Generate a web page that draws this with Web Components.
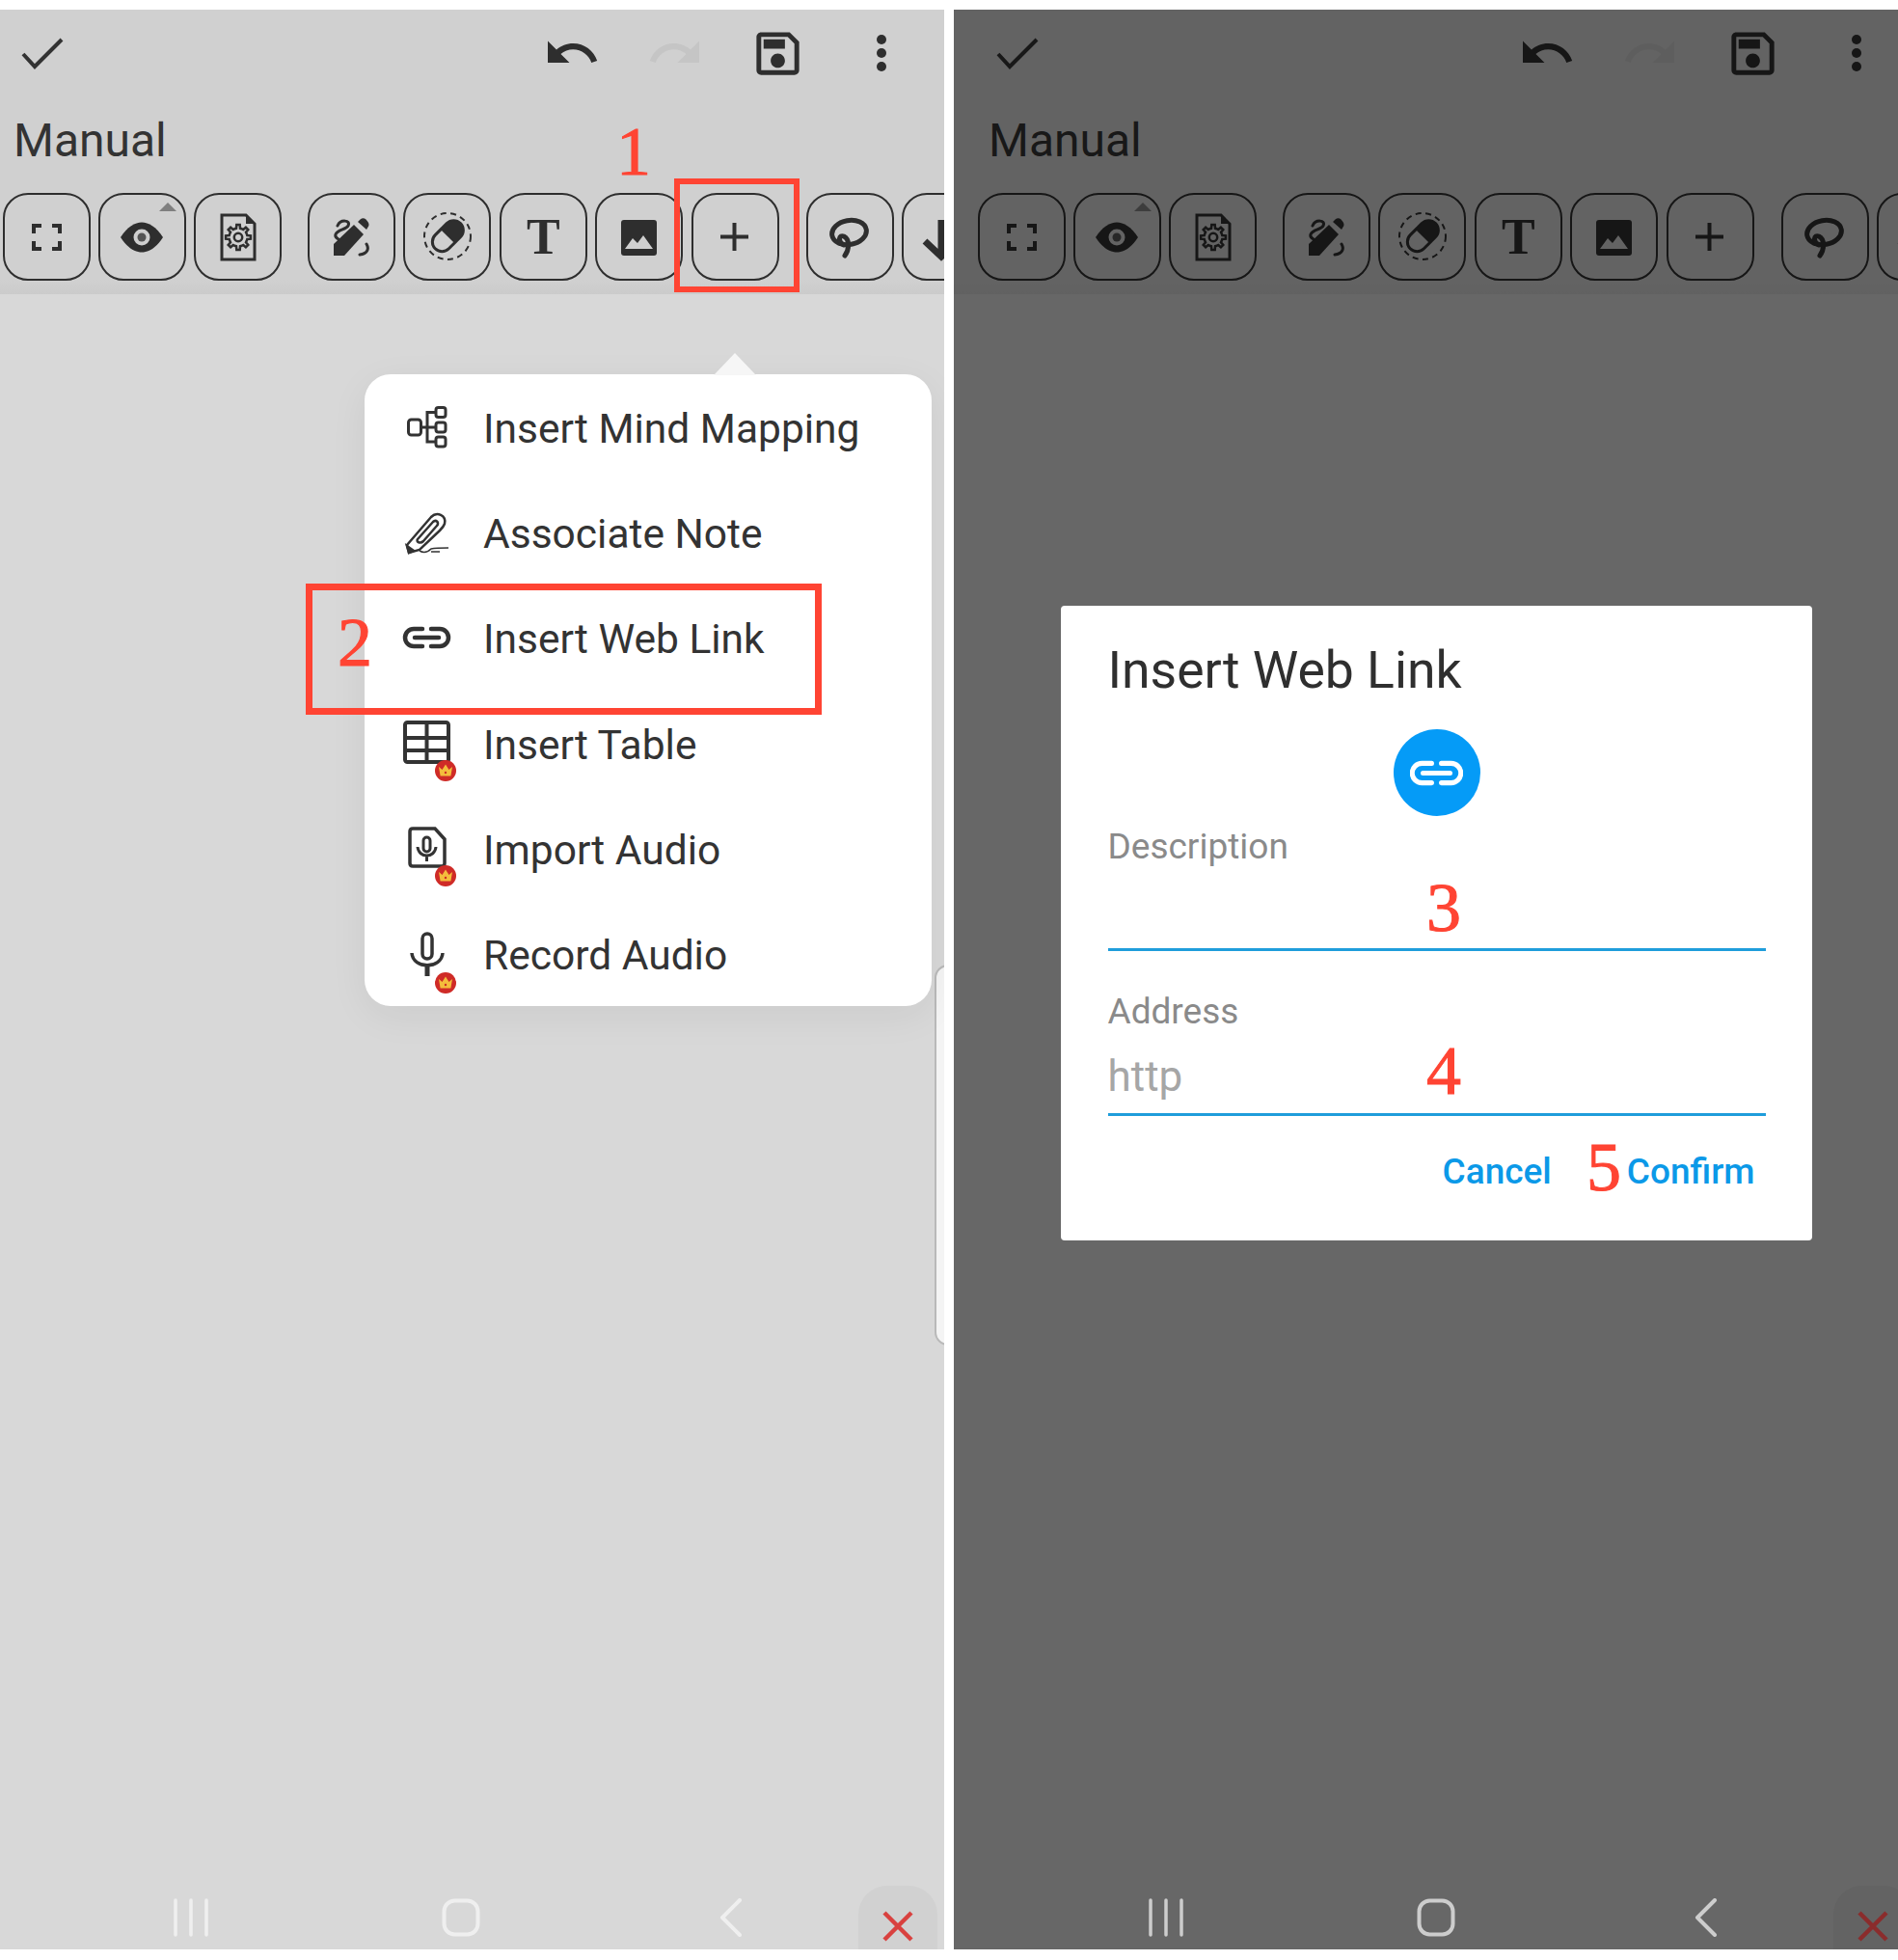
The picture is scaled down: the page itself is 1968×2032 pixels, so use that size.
<!DOCTYPE html>
<html lang="en">
<head>
<meta charset="utf-8">
<title>Insert Web Link</title>
<style>
    html, body { margin: 0; background: #fff; }
    body { font-family: Roboto, "Liberation Sans", sans-serif; }
</style>
</head>
<body>
<guide-page>
    <note-screen>
        <popup-menu>
            <menu-row label="Insert Mind Mapping" icon="mind"></menu-row>
            <menu-row label="Associate Note" icon="clip"></menu-row>
            <menu-row label="Insert Web Link" icon="link"></menu-row>
            <menu-row label="Insert Table" icon="table"></menu-row>
            <menu-row label="Import Audio" icon="import"></menu-row>
            <menu-row label="Record Audio" icon="mic"></menu-row>
        </popup-menu>
        <mark-box x="699" y="175" w="130" h="118" line="6"></mark-box>
        <mark-box x="317" y="595" w="535" h="136" line="7"></mark-box>
        <step-num x="639" y="111">1</step-num>
        <step-num x="350" y="620">2</step-num>
    </note-screen>
    <note-screen dimmed>
        <link-dialog></link-dialog>
        <step-num x="490" y="895" over>3</step-num>
        <step-num x="490" y="1064" over>4</step-num>
        <step-num x="656" y="1164" over>5</step-num>
    </note-screen>
</guide-page>

<script>
const DARK = '#2e2e2e';
const LINK_PATH = 'M20 3H11a9 9 0 0 0 0 18h9M29 3h9a9 9 0 0 1 0 18h-9M12 12h25';

function gearPath(cx, cy, outer, inner, teeth) {
    let d = '';
    const step = Math.PI * 2 / teeth;
    for (let i = 0; i < teeth; i++) {
        const a = i * step;
        const pts = [
            [inner, a - step * 0.5], [inner, a - step * 0.27],
            [outer, a - step * 0.17], [outer, a + step * 0.17], [inner, a + step * 0.27]
        ];
        pts.forEach(([r, t], n) => {
            const x = (cx + r * Math.cos(t)).toFixed(1);
            const y = (cy + r * Math.sin(t)).toFixed(1);
            d += (i === 0 && n === 0 ? 'M' : 'L') + x + ' ' + y;
        });
    }
    return d + 'Z';
}

function crown(cx, cy) {
    return `<circle cx="${cx}" cy="${cy}" r="11" fill="#cf2b27"/>
        <path d="M${cx - 7} ${cy - 4}l3.5 3 3.5-5.5 3.5 5.5 3.5-3-1.6 9.5h-10.8z" fill="#f4bd3c"/>
        <circle cx="${cx}" cy="${cy + 2}" r="1.2" fill="#cf2b27"/>`;
}

// toolbar icons, drawn in the 91x91 box of their button
const TOOL_ICONS = {
    frame: `<path d="M32 42V34h8M51 34h8v8M32 50v8h8M51 58h8v-8" fill="none" stroke="${DARK}" stroke-width="4"/>`,
    eye: `<path d="M23 46C30 35 38 30.500 45 30.500S60 35 67 46C60 57 52 61.500 45 61.500S30 57 23 46Z" fill="${DARK}"/>
        <circle cx="45" cy="46" r="8.500" fill="#cfcfcf"/><circle cx="45" cy="46" r="4.500" fill="#555"/>
        <path d="M63 19l9-9 9 9z" fill="#7f7f7f"/>`,
    doc: `<path d="M29 23H54L63 32V69H29Z" fill="none" stroke="${DARK}" stroke-width="3"/>
        <path d="M54 23l9 9h-9z" fill="${DARK}"/>
        <path d="${gearPath(46, 46, 13, 9.500, 8)}" fill="none" stroke="${DARK}" stroke-width="2.500"/>
        <circle cx="46" cy="46" r="4.200" fill="none" stroke="${DARK}" stroke-width="2.500"/>`,
    pencil: `<path d="M27 65V53L48 33 58 43 38 65Z" fill="${DARK}"/>
        <path d="M52 30l2.500-2.500q3-2.500 6 0l2 2.500q2 3 0 5.500L61 38Z" fill="${DARK}"/>
        <path d="M31 34C34 27 45 28 42 34 40 38 31 38 29 43 28 46 30 47 32 48M61 53C64 58 62 63 54 64" fill="none" stroke="${DARK}" stroke-width="3" stroke-linecap="round"/>`,
    eraser: `<circle cx="46" cy="45" r="24" fill="none" stroke="${DARK}" stroke-width="2" stroke-dasharray="6 4.500"/>
        <g transform="rotate(-45 46 45)">
            <rect x="28" y="35" width="37" height="20" rx="10" fill="none" stroke="${DARK}" stroke-width="3"/>
            <path d="M46 35H55a10 10 0 0 1 0 20H46Z" fill="${DARK}"/>
        </g>`,
    image: `<rect x="27" y="28" width="37" height="37" rx="3" fill="${DARK}"/>
        <path d="M31 58L39 47 44 52 50 44 60 58Z" fill="#cfcfcf"/>`,
    plus: `<path d="M45.500 31V60M31 45.500H60" stroke="${DARK}" stroke-width="4" fill="none"/>`,
    lasso: `<ellipse cx="45.500" cy="41" rx="18" ry="12.500" transform="rotate(-10 45.500 41)" fill="none" stroke="${DARK}" stroke-width="5"/>
        <path d="M40 54C33 50 35 43 40 45 46 48 46 58 41 65" fill="none" stroke="${DARK}" stroke-width="5" stroke-linecap="round"/>`,
    down: `<path d="M42 28V66M25 50L42 66 59 50" fill="none" stroke="${DARK}" stroke-width="7"/>`
};

// menu icons, drawn in an 80x70 box centred on the row
const MENU_ICONS = {
    mind: `<g fill="none" stroke="#333" stroke-width="3" transform="translate(20 13)">
        <rect x="1.500" y="14" width="13" height="16" rx="3"/>
        <rect x="30" y="1.500" width="10" height="10" rx="2.500"/><rect x="30" y="17" width="10" height="10" rx="2.500"/><rect x="30" y="32" width="10" height="10" rx="2.500"/>
        <path d="M15 22H30M30 6.500H21V37H30"/></g>`,
    clip: `<g fill="none" stroke="#333" stroke-width="2.500" transform="translate(18 13)">
        <path d="M2 35L27 6C33 0 43 4 41 13 40 16 38 18 36 20L15 40 4 43Z"/>
        <path d="M13 29L29 11C32 8 36 12 33 15L19 31C16 34 11 32 13 29Z"/>
        <path d="M4 43L2 36 9 41Z" fill="#333"/>
        <path d="M15 41C20 44 24 42 27 39 32 38 38 38 45 38M27 42H36" stroke-width="1.500"/></g>`,
    link: `<path d="${LINK_PATH}" transform="translate(16 23)" fill="none" stroke="#333" stroke-width="4.500" stroke-linecap="round"/>`,
    table: `<g fill="none" stroke="#333" stroke-width="4" transform="translate(16 12)">
        <rect x="2" y="2" width="45" height="41" rx="2.500"/><path d="M24.500 2V43M2 18H47M2 31H47"/></g>${crown(60, 64)}`,
    import: `<g fill="none" stroke="#333" stroke-width="3.500" transform="translate(21 13)">
        <path d="M5 2H28L38 13V38Q38 41 35 41H5Q2 41 2 38V5Q2 2 5 2Z"/>
        <rect x="16" y="11" width="7" height="15" rx="3.500" stroke-width="3"/>
        <path d="M10 21C11 33 28 33 29 21M19.500 30V36" stroke-width="3"/></g>${crown(60, 64)}`,
    mic: `<g fill="none" stroke="#333" stroke-width="3.500" transform="translate(24 12)">
        <rect x="12" y="2" width="10" height="26" rx="5"/>
        <path d="M1 22C2 39 32 39 33 22"/><path d="M17 35V46" stroke-width="5"/></g>${crown(60, 65)}`
};

class GuidePage extends HTMLElement {
    constructor() {
        super();
        this.attachShadow({ mode: 'open' });
        this.shadowRoot.innerHTML = `
            <style>
                :host { display: flex; gap: 10px; padding: 10px 0 11px; height: 2032px; box-sizing: border-box; width: 1968px; overflow: hidden; }
            </style>
            <slot></slot>
        `;
    }
}

class NoteScreen extends HTMLElement {
    constructor() {
        super();
        this.attachShadow({ mode: 'open' });
        this.shadowRoot.innerHTML = `
            <style>
                :host {
                    --inset: 0px;
                    --nav-color: #efefef;
                    --close-bg: #d1d1d1;
                    --close-x: #d9413f;
                    display: flex;
                    flex-direction: column;
                    position: relative;
                    width: 979px;
                    overflow: hidden;
                    background: #d8d8d8;
                    color: #333;
                }
                :host([dimmed]) {
                    --inset: 22px;
                    --nav-color: #cdcdcd;
                    --close-bg: #636363;
                    --close-x: #8b2c2c;
                }
                .content { flex: 1; display: flex; flex-direction: column; flex-shrink: 0; width: calc(979px + var(--inset)); }
                .rest { flex: 1; }
                .scrim { display: none; position: absolute; inset: 0; background: rgba(0, 0, 0, .52); z-index: 1; }
                :host([dimmed]) .scrim { display: block; }
                .handle {
                    position: absolute;
                    left: calc(969px + var(--inset));
                    top: 990px;
                    width: 30px;
                    height: 395px;
                    box-sizing: border-box;
                    background: #f4f4f4;
                    border: 2px solid #b9b9b9;
                    border-radius: 14px;
                }
            </style>
            <div class="content">
                <screen-header></screen-header>
                <div class="rest"></div>
                <nav-bar></nav-bar>
            </div>
            <div class="handle"></div>
            <div class="scrim"></div>
            <slot></slot>
        `;
    }
}

class ScreenHeader extends HTMLElement {
    constructor() {
        super();
        this.attachShadow({ mode: 'open' });
        const group = (names) => names.map(n => `<tool-button icon="${n}"></tool-button>`).join('');
        this.shadowRoot.innerHTML = `
            <style>
                :host { display: block; background: linear-gradient(#d0d0d0 95%, #cbcbcb); height: 295px; overflow: hidden; padding-left: var(--inset); }
                .top { display: flex; align-items: center; height: 90px; padding-right: 12px; width: 967px; }
                .slot { width: 107px; height: 90px; display: flex; align-items: center; justify-content: center; }
                .check { margin-right: auto; width: 88px; }
                .title { font-size: 48px; height: 100px; line-height: 92px; padding-left: 14px; color: #333; }
                .tools { display: flex; gap: 8px; padding-left: 3px; width: 1100px; }
                .gap { margin-left: 19px; display: flex; gap: 8.400px; }
                .gap.last { margin-left: 20px; gap: 8px; }
                .t { font: bold 52px "Liberation Serif", serif; color: ${DARK}; }
            </style>
            <div class="top">
                <div class="slot check">
                    <svg width="44" height="34" viewBox="0 0 44 34"><path d="M2 18L14 31 42 3" fill="none" stroke="#333" stroke-width="4"/></svg>
                </div>
                <div class="slot"><svg width="60" height="60" viewBox="0 0 24 24"><path fill="${DARK}" d="M12.500 8c-2.650 0-5.050.99-6.900 2.600L2 7v9h9l-3.620-3.620c1.390-1.160 3.160-1.880 5.120-1.880 3.540 0 6.550 2.310 7.600 5.500l2.370-.78C21.080 11.030 17.150 8 12.500 8z"/></svg></div>
                <div class="slot"><svg width="60" height="60" viewBox="0 0 24 24"><path fill="#c5c5c5" d="M18.400 10.600C16.550 8.990 14.150 8 11.500 8c-4.650 0-8.580 3.030-9.960 7.220L3.900 16c1.050-3.190 4.050-5.500 7.600-5.500 1.950 0 3.730.72 5.120 1.880L13 16h9V7l-3.600 3.600z"/></svg></div>
                <div class="slot"><svg width="59" height="59" viewBox="0 0 24 24"><path fill="${DARK}" d="M17 3H5c-1.110 0-2 .9-2 2v14c0 1.100.89 2 2 2h14c1.100 0 2-.9 2-2V7l-4-4zm2 16H5V5h11.170L19 7.830V19zm-7-7c-1.660 0-3 1.340-3 3s1.340 3 3 3 3-1.340 3-3-1.340-3-3-3zM6 6h9v4H6z"/></svg></div>
                <div class="slot"><svg width="12" height="40" viewBox="0 0 12 40"><circle cx="6" cy="6" r="5" fill="${DARK}"/><circle cx="6" cy="20" r="5" fill="${DARK}"/><circle cx="6" cy="34" r="5" fill="${DARK}"/></svg></div>
            </div>
            <div class="title">Manual</div>
            <div class="tools">
                ${group(['frame', 'eye', 'doc'])}
                <div class="gap">
                    ${group(['pencil', 'eraser'])}
                    <tool-button><span class="t">T</span></tool-button>
                    ${group(['image', 'plus'])}
                </div>
                <div class="gap last">${group(['lasso', 'down'])}</div>
            </div>
        `;
    }
}

class ToolButton extends HTMLElement {
    constructor() {
        super();
        this.attachShadow({ mode: 'open' });
    }

    connectedCallback() {
        const icon = TOOL_ICONS[this.getAttribute('icon')] || '';
        this.shadowRoot.innerHTML = `
            <style>
                :host { display: flex; align-items: center; justify-content: center; position: relative; flex: none; width: 91px; height: 91px; box-sizing: border-box; border: 2.5px solid ${DARK}; border-radius: 26px; }
                svg { position: absolute; left: -2.500px; top: -2.500px; }
            </style>
            ${icon ? `<svg width="91" height="91" viewBox="0 0 91 91">${icon}</svg>` : '<slot></slot>'}
        `;
    }
}

class NavBar extends HTMLElement {
    constructor() {
        super();
        this.attachShadow({ mode: 'open' });
        this.shadowRoot.innerHTML = `
            <style>
                :host { display: flex; align-items: center; position: relative; z-index: 2; height: 66px; padding-left: calc(58px + var(--inset)); }
                .item { width: 280px; display: flex; justify-content: center; }
                svg { display: block; }
                .close {
                    position: absolute;
                    left: calc(890px + var(--inset));
                    top: 0;
                    width: 82px;
                    height: 66px;
                    background: var(--close-bg);
                    border-radius: 30px 30px 0 0;
                    display: flex;
                    align-items: center;
                    justify-content: center;
                }
            </style>
            <div class="item">
                <svg width="38" height="40" viewBox="0 0 38 40" fill="none" stroke="var(--nav-color)" stroke-width="3.500" stroke-linecap="round"><path d="M3 2V38M19 2V38M35 2V38"/></svg>
            </div>
            <div class="item">
                <svg width="40" height="40" viewBox="0 0 40 40"><rect x="2.500" y="2.500" width="35" height="35" rx="11" fill="none" stroke="var(--nav-color)" stroke-width="4"/></svg>
            </div>
            <div class="item">
                <svg width="24" height="40" viewBox="0 0 24 40"><path d="M21 2L3 20 21 38" fill="none" stroke="var(--nav-color)" stroke-width="4" stroke-linecap="round" stroke-linejoin="round"/></svg>
            </div>
            <div class="close">
                <svg width="34" height="32" viewBox="0 0 34 32" style="margin-top:18px"><path d="M3 2L31 30M31 2L3 30" stroke="var(--close-x)" stroke-width="4.500" fill="none"/></svg>
            </div>
        `;
    }
}

class PopupMenu extends HTMLElement {
    constructor() {
        super();
        this.attachShadow({ mode: 'open' });
        this.shadowRoot.innerHTML = `
            <style>
                :host {
                    display: block;
                    position: absolute;
                    left: 378px;
                    top: 378px;
                    width: 588px;
                    height: 655px;
                    background: #fff;
                    border-radius: 27px;
                    box-shadow: 0 10px 40px rgba(0, 0, 0, .06);
                }
                .arrow { position: absolute; left: 362px; top: -23px; }
            </style>
            <svg class="arrow" width="44" height="24" viewBox="0 0 44 24"><path d="M0 24L22 1 44 24Z" fill="#f6f6f6"/></svg>
            <slot></slot>
        `;
    }
}

class MenuRow extends HTMLElement {
    constructor() {
        super();
        this.attachShadow({ mode: 'open' });
    }

    connectedCallback() {
        this.shadowRoot.innerHTML = `
            <style>
                :host { display: flex; align-items: center; height: 109.200px; font-size: 42.500px; color: #333; }
                svg { flex: none; margin: 0 19px 0 24px; overflow: visible; }
                span { padding-top: 4px; }
            </style>
            <svg width="80" height="70" viewBox="0 0 80 70">${MENU_ICONS[this.getAttribute('icon')]}</svg>
            <span>${this.getAttribute('label')}</span>
        `;
    }
}

class LinkDialog extends HTMLElement {
    constructor() {
        super();
        this.attachShadow({ mode: 'open' });
        this.shadowRoot.innerHTML = `
            <style>
                :host {
                    display: block;
                    position: absolute;
                    left: 111px;
                    top: 618px;
                    width: 779px;
                    height: 658px;
                    box-sizing: border-box;
                    padding: 37px 48.500px 0;
                    background: #fff;
                    border-radius: 4px;
                    z-index: 3;
                }
                h2 { margin: 0; font-weight: 400; font-size: 53.500px; line-height: 60px; color: #2f2f2f; }
                .badge { width: 90px; height: 90px; margin: 31px auto 0; border-radius: 50%; background: #059bf7; display: flex; align-items: center; justify-content: center; }
                label { display: block; font-size: 37px; line-height: 44px; color: #8a8a8a; }
                .input { height: 86px; box-sizing: border-box; border-bottom: 3px solid #1f9ddb; font-size: 44px; color: #a6a6a6; display: flex; align-items: center; padding-top: 6px; }
                .first { margin-top: 10px; }
                .second { margin-top: 41px; }
                .actions { display: flex; justify-content: flex-end; gap: 78px; align-items: center; height: 60px; margin-top: 27px; padding-right: 11px; font-size: 37px; font-weight: 500; color: #0b99e8; }
            </style>
            <h2>Insert Web Link</h2>
            <div class="badge">
                <svg width="55" height="27" viewBox="0 0 49 24"><path d="${LINK_PATH}" fill="none" stroke="#fff" stroke-width="4.500" stroke-linecap="round"/></svg>
            </div>
            <label class="first">Description</label>
            <div class="input"></div>
            <label class="second">Address</label>
            <div class="input">http</div>
            <div class="actions"><span>Cancel</span><span>Confirm</span></div>
        `;
    }
}

class MarkBox extends HTMLElement {
    constructor() {
        super();
        this.attachShadow({ mode: 'open' });
        this.shadowRoot.innerHTML = `
            <style>
                :host { display: block; position: absolute; box-sizing: border-box; border: solid #ff4433; z-index: 4; }
            </style>
        `;
    }

    connectedCallback() {
        this.style.left = this.getAttribute('x') + 'px';
        this.style.top = this.getAttribute('y') + 'px';
        this.style.width = this.getAttribute('w') + 'px';
        this.style.height = this.getAttribute('h') + 'px';
        this.style.borderWidth = this.getAttribute('line') + 'px';
    }
}

class StepNum extends HTMLElement {
    constructor() {
        super();
        this.attachShadow({ mode: 'open' });
        this.shadowRoot.innerHTML = `
            <style>
                :host { display: block; position: absolute; z-index: 4; font: 72px/1 "Liberation Serif", serif; color: #ff4433; -webkit-text-stroke: 1px #ff4433; }
            </style>
            <slot></slot>
        `;
    }

    connectedCallback() {
        this.style.left = this.getAttribute('x') + 'px';
        this.style.top = this.getAttribute('y') + 'px';
    }
}

customElements.define('guide-page', GuidePage);
customElements.define('note-screen', NoteScreen);
customElements.define('screen-header', ScreenHeader);
customElements.define('tool-button', ToolButton);
customElements.define('nav-bar', NavBar);
customElements.define('popup-menu', PopupMenu);
customElements.define('menu-row', MenuRow);
customElements.define('link-dialog', LinkDialog);
customElements.define('mark-box', MarkBox);
customElements.define('step-num', StepNum);
</script>
</body>
</html>
